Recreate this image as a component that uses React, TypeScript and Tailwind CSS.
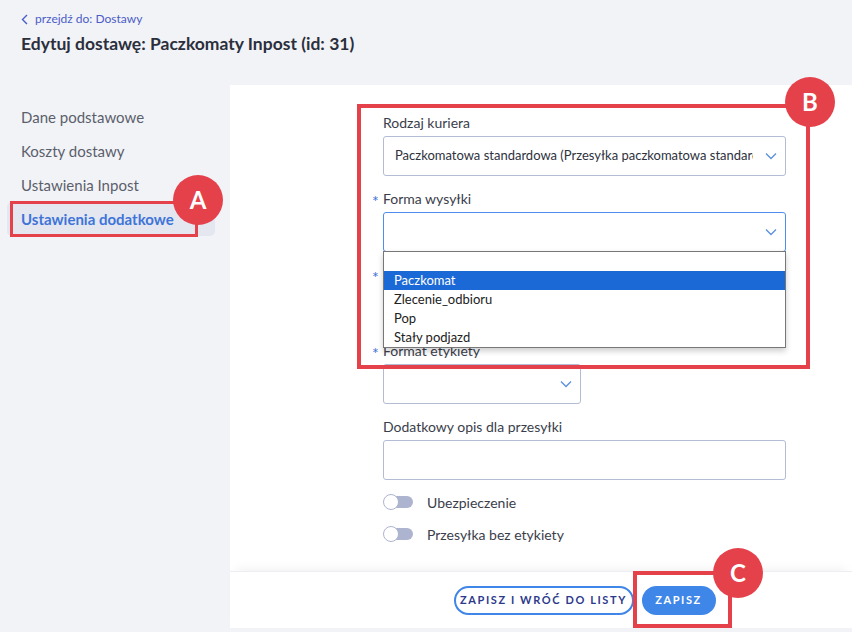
import React from "react";

const Chevron = ({ className = "" }: { className?: string }) => (
  <svg width="12" height="8" viewBox="0 0 12 8" className={className} fill="none">
    <path d="M1 1.5L6 6.5L11 1.5" stroke="#5b8fe0" strokeWidth="1.3" />
  </svg>
);

const Label = ({ text, req }: { text: string; req?: boolean }) => (
  <div className="relative h-[18px] leading-[18px] text-[14px] text-[#3a3e4b] mb-[4px]">
    {req && <span className="absolute left-[-11px] top-[2px] text-[#3f6fd8] text-[16px]">*</span>}
    {text}
  </div>
);

const Toggle = ({ label }: { label: string }) => (
  <div className="flex items-center h-[16px]">
    <div className="relative w-[30px] h-[16px]">
      <div className="absolute left-[6px] top-[2px] w-[24px] h-[12px] rounded-full bg-[#adb4cf]" />
      <div className="absolute left-0 top-0 w-[16px] h-[16px] rounded-full bg-white border border-[#aeb5d0]" />
    </div>
    <span className="ml-[14px] text-[14px] text-[#3a3e4b]">{label}</span>
  </div>
);

const Badge = ({ letter, className }: { letter: string; className: string }) => (
  <div
    className={
      "absolute w-[50px] h-[50px] rounded-full bg-[#e4414b] text-white font-bold text-[24px] flex items-center justify-center " +
      className
    }
  >
    {letter}
  </div>
);

export default function App() {
  return (
    <div
      className="relative w-[852px] h-[632px] overflow-hidden bg-[#f2f3f7]"
      style={{ fontFamily: "Lato, 'Open Sans', sans-serif" }}
    >
      {/* header */}
      <div className="pl-[21px] pt-[11px] h-[85px]">
        <div className="flex items-center gap-[7px] text-[12px] text-[#4a5cc8] h-[16px]">
          <svg width="7" height="11" viewBox="0 0 7 11" fill="none">
            <path d="M6 1L1.5 5.5L6 10" stroke="#4a5cc8" strokeWidth="1.4" />
          </svg>
          <span>przejdź do: Dostawy</span>
        </div>
        <div className="mt-[6px] text-[17.5px] font-bold text-[#2b2f3c] leading-[22px]">
          Edytuj dostawę: Paczkomaty Inpost (id: 31)
        </div>
      </div>

      <div className="flex h-[543px]">
        {/* sidebar */}
        <div className="w-[230px] pt-[15px] pl-[7px]">
          <div className="flex flex-col text-[15px] text-[#5b5f6c]">
            <div className="h-[34px] flex items-center pl-[14px]">Dane podstawowe</div>
            <div className="h-[34px] flex items-center pl-[14px]">Koszty dostawy</div>
            <div className="h-[34px] flex items-center pl-[14px]">Ustawienia Inpost</div>
            <div className="h-[34px] w-[208px] flex items-center pl-[14px] rounded-[5px] bg-[#e4e7f0] text-[#3e74d8] font-bold">
              Ustawienia dodatkowe
            </div>
          </div>
        </div>

        {/* main panel */}
        <div className="flex-1 bg-white flex flex-col">
          <div className="flex-1 pl-[153px] pt-[29px] relative">
            <div className="w-[403px] flex flex-col">
              <Label text="Rodzaj kuriera" />
              <div className="h-[40px] rounded-[3px] border border-[#b3bcd4] flex items-center pl-[11px] pr-[8px]">
                <span className="flex-1 overflow-hidden whitespace-nowrap text-[13px] text-[#2e323d]">
                  Paczkomatowa standardowa (Przesyłka paczkomatowa standardowa)
                </span>
                <Chevron className="ml-[12px] shrink-0" />
              </div>

              <div className="h-[14px]" />
              <Label text="Forma wysyłki" req />
              <div className="relative">
                <div className="h-[40px] rounded-[3px] border border-[#4f8ef0] flex items-center justify-end pr-[8px]">
                  <Chevron />
                </div>
                {/* native dropdown */}
                <div className="absolute left-0 top-[39px] w-[403px] z-10 bg-white border border-[#777] shadow-[0_3px_6px_rgba(0,0,0,0.2)] text-[13px] text-[#222]">
                  <div className="h-[19px]" />
                  <div className="h-[19px] leading-[19px] pl-[10px] bg-[#1b69d6] text-white">Paczkomat</div>
                  <div className="h-[19px] leading-[19px] pl-[10px]">Zlecenie_odbioru</div>
                  <div className="h-[19px] leading-[19px] pl-[10px]">Pop</div>
                  <div className="h-[19px] leading-[19px] pl-[10px]">Stały podjazd</div>
                </div>
              </div>

              <div className="h-[14px]" />
              <Label text="" req />
              <div className="h-[40px] rounded-[3px] border border-[#b3bcd4]" />

              <div className="h-[14px]" />
              <Label text="Format etykiety" req />
              <div className="w-[198px] h-[40px] rounded-[3px] border border-[#b3bcd4] flex items-center justify-end pr-[8px]">
                <Chevron />
              </div>

              <div className="h-[14px]" />
              <Label text="Dodatkowy opis dla przesyłki" />
              <div className="h-[40px] rounded-[3px] border border-[#b3bcd4]" />

              <div className="h-[14px]" />
              <Toggle label="Ubezpieczenie" />
              <div className="h-[16px]" />
              <Toggle label="Przesyłka bez etykiety" />
            </div>
          </div>

          {/* footer */}
          <div className="h-[57px] border-t border-[#eceef3] shadow-[0_-8px_10px_-6px_rgba(0,0,0,0.06)] pl-[153px]">
            <div className="w-[403px] h-full flex items-center justify-center gap-[8px]">
              <button className="h-[29px] w-[180px] rounded-full border-2 border-[#3f86e8] text-[11px] font-bold tracking-[1.6px] text-[#2d3a8c] bg-white">
                ZAPISZ I WRÓĆ DO LISTY
              </button>
              <button className="h-[29px] w-[74px] rounded-full bg-[#3e86e7] text-[11px] font-bold tracking-[1.6px] text-white">
                ZAPISZ
              </button>
            </div>
          </div>
        </div>
      </div>
      <div className="absolute left-[230px] right-0 bottom-0 h-[4px] bg-[#f2f3f7]" />

      {/* annotations */}
      <div className="absolute left-[10px] top-[201px] w-[188px] h-[36px] border-[3px] border-[#e4414b]" />
      <Badge letter="A" className="left-[173px] top-[175px]" />
      <div className="absolute left-[357px] top-[104px] w-[453px] h-[265px] border-[4px] border-[#e4414b] z-20" />
      <Badge letter="B" className="left-[785px] top-[77px] z-30" />
      <div className="absolute left-[633px] top-[571px] w-[99px] h-[57px] border-[4px] border-[#e4414b]" />
      <Badge letter="C" className="left-[713px] top-[548px]" />
    </div>
  );
}
